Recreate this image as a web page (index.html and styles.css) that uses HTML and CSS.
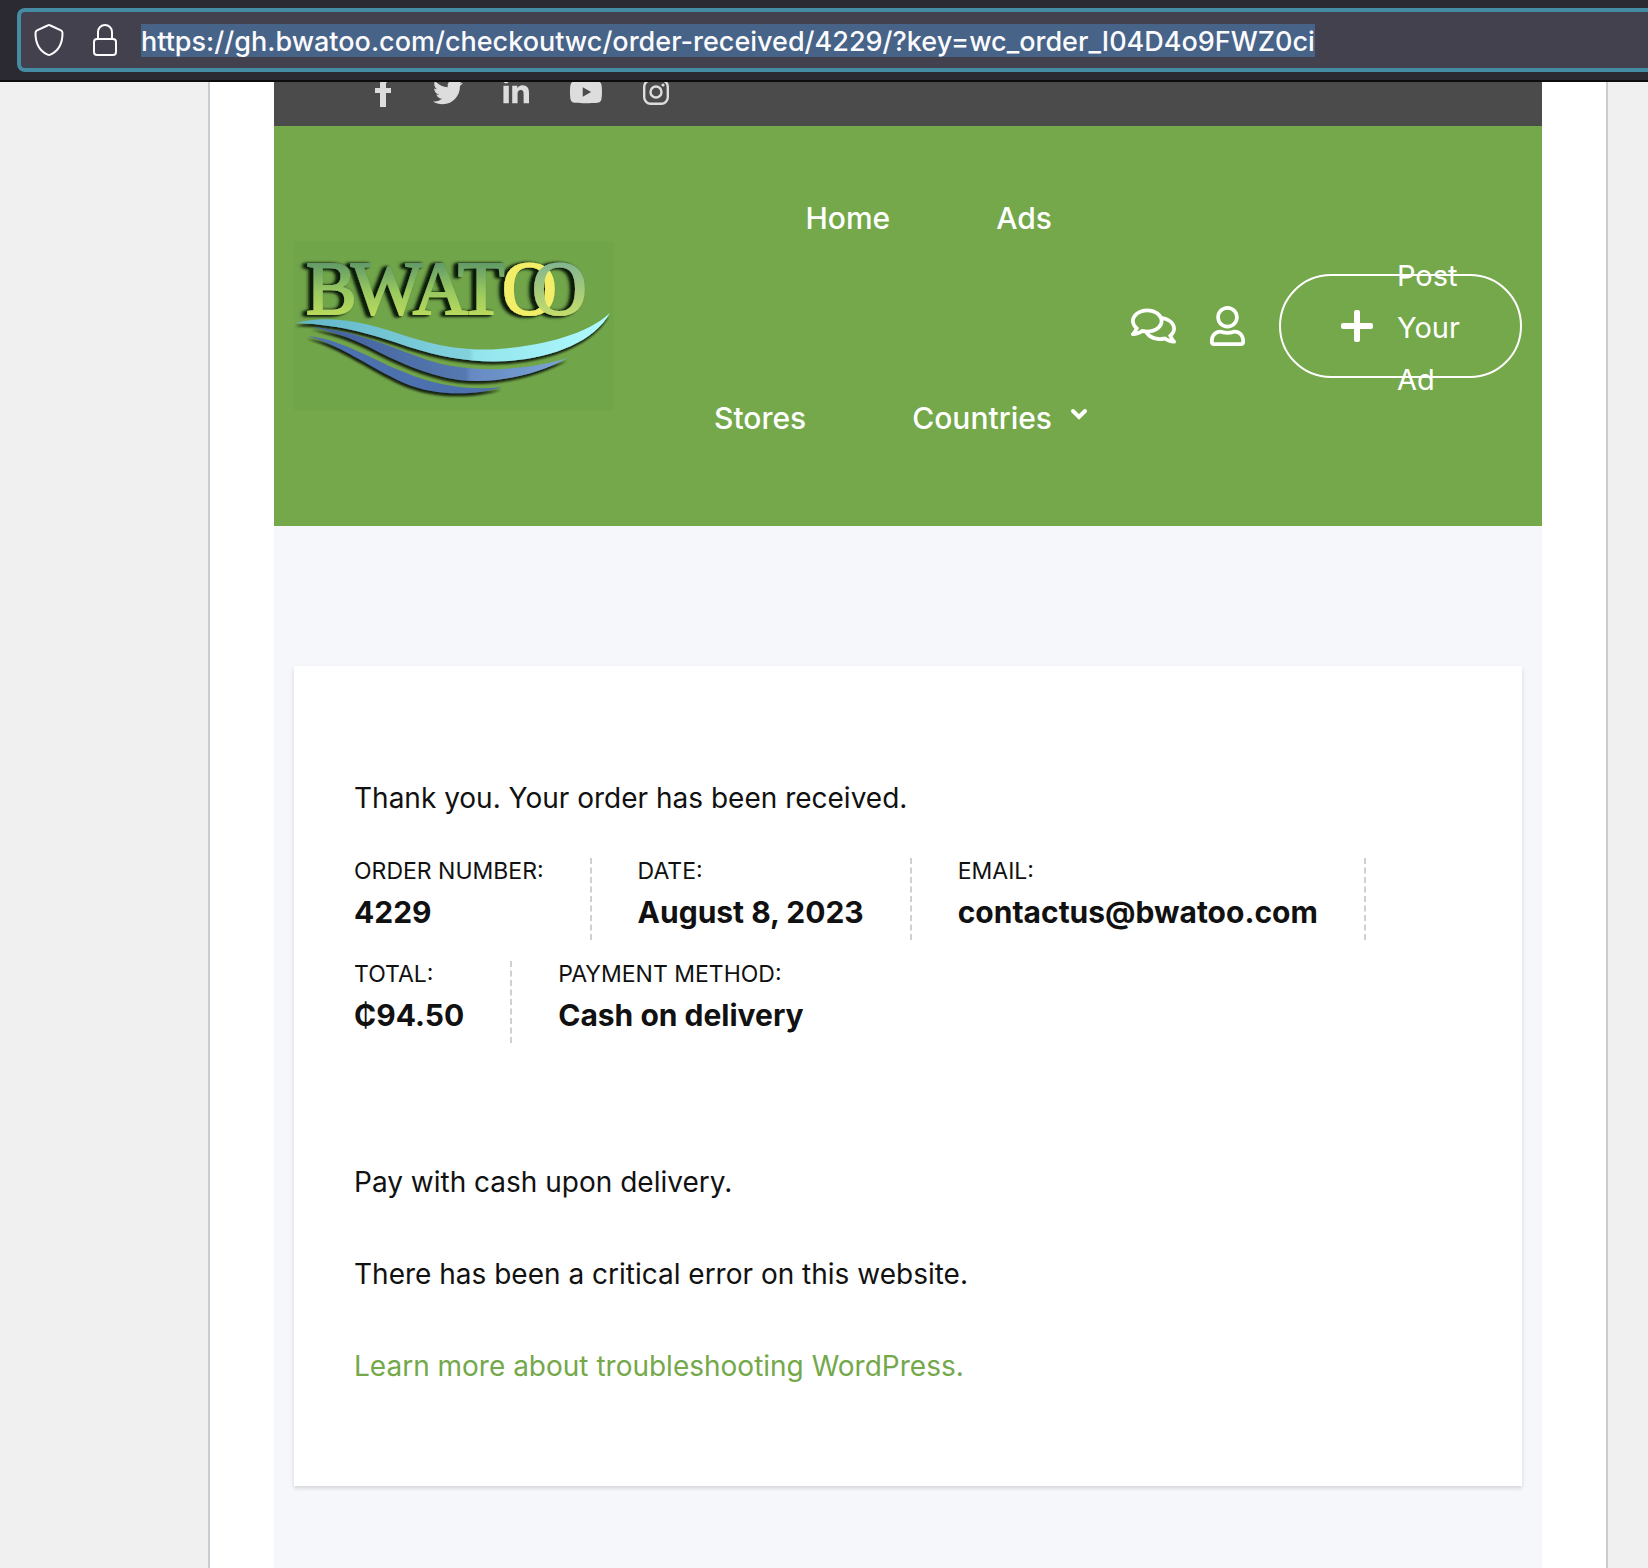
FILE: index.html
```html
<!DOCTYPE html>
<html lang="en">
<head>
    <meta charset="UTF-8">
    <meta name="viewport" content="width=device-width, initial-scale=1.0">
    <title>Order received - Bwatoo</title>
    <link rel="stylesheet" href="styles.css">
</head>
<body>
    <div class="browser-bar">
        <div class="url-box">
            <svg class="url-icon shield" viewBox="0 0 30 32" fill="none" stroke="#fbfbfe" stroke-width="2" stroke-linejoin="round">
                <path d="M13.600 1.500Q15 .7 16.400 1.500L27 6.400Q28.500 7.200 28.500 9C28.500 19 24.500 27 16.400 30.600Q15 31.300 13.600 30.600C5.500 27 1.500 19 1.500 9Q1.500 7.200 3 6.400Z"/>
            </svg>
            <svg class="url-icon lock" viewBox="0 0 24 32" fill="none" stroke="#fbfbfe" stroke-width="2">
                <path d="M5 15V8a7 7 0 0 1 14 0v7"/>
                <rect x="1" y="15" width="22" height="16" rx="3"/>
            </svg>
            <input class="url-input" type="text" aria-label="Address" value="https://gh.bwatoo.com/checkoutwc/order-received/4229/?key=wc_order_I04D4o9FWZ0ci">
        </div>
    </div>

    <div class="page">
        <div class="site">
            <div class="top-bar">
                <a href="#" aria-label="Facebook">
                    <svg width="18" height="30" viewBox="0 0 18 30"><path d="M5 30V16H0v-5h5V7c0-5 3-7 7-7h4v5h-3c-2 0-2 1-2 3v3h5v5h-5v14z"/></svg>
                </a>
                <a href="#" aria-label="Twitter">
                    <svg width="30" height="30" viewBox="0 0 512 512"><path d="M459.370 151.716c.325 4.548.325 9.097.325 13.645 0 138.720-105.583 298.558-298.558 298.558-59.452 0-114.680-17.219-161.137-47.106 8.447.974 16.568 1.299 25.340 1.299 49.055 0 94.213-16.568 130.274-44.832-46.132-.975-84.792-31.188-98.112-72.772 6.498.974 12.995 1.624 19.818 1.624 9.421 0 18.843-1.300 27.614-3.573-48.081-9.747-84.143-51.980-84.143-102.985v-1.299c13.969 7.797 30.214 12.670 47.431 13.319-28.264-18.843-46.781-51.005-46.781-87.391 0-19.492 5.197-37.360 14.294-52.954 51.655 63.675 129.300 105.258 216.365 109.807-1.624-7.797-2.599-15.918-2.599-24.040 0-57.828 46.782-104.934 104.934-104.934 30.213 0 57.502 12.670 76.670 33.137 23.715-4.548 46.456-13.320 66.599-25.340-7.798 24.366-24.366 44.833-46.132 57.827 21.117-2.273 41.584-8.122 60.426-16.243-14.292 20.791-32.161 39.308-52.628 54.253z"/></svg>
                </a>
                <a href="#" aria-label="LinkedIn">
                    <svg width="26" height="30" viewBox="0 0 448 512"><path d="M100.280 448H7.400V148.900h92.880zM53.790 108.100C24.090 108.100 0 83.500 0 53.800a53.790 53.790 0 0 1 107.580 0c0 29.700-24.100 54.300-53.790 54.300zM447.900 448h-92.680V302.400c0-34.700-.7-79.200-48.290-79.200-48.290 0-55.690 37.700-55.690 76.700V448h-92.780V148.900h89.080v40.800h1.300c12.400-23.500 42.690-48.300 87.880-48.300 94 0 111.280 61.900 111.280 142.300V448z"/></svg>
                </a>
                <a href="#" aria-label="YouTube">
                    <svg width="34" height="30" viewBox="0 0 576 512"><path d="M549.655 124.083c-6.281-23.650-24.787-42.276-48.284-48.597C458.781 64 288 64 288 64S117.220 64 74.629 75.486c-23.497 6.322-42.003 24.947-48.284 48.597-11.412 42.867-11.412 132.305-11.412 132.305s0 89.438 11.412 132.305c6.281 23.650 24.787 41.500 48.284 47.821C117.220 448 288 448 288 448s170.780 0 213.371-11.486c23.497-6.321 42.003-24.171 48.284-47.821 11.412-42.867 11.412-132.305 11.412-132.305s0-89.438-11.412-132.305zm-317.510 213.508V175.185l142.739 81.205-142.739 81.201z"/></svg>
                </a>
                <a href="#" aria-label="Instagram">
                    <svg width="26" height="30" viewBox="0 0 26 30"><rect x="1.200" y="3.200" width="23.600" height="23.600" rx="6.500" fill="none" stroke="#ddd" stroke-width="2.400"/><circle cx="13" cy="15" r="5.500" fill="none" stroke="#ddd" stroke-width="2.400"/><circle cx="20" cy="8" r="1.600"/></svg>
                </a>
            </div>

            <header class="header">
                <a class="logo" href="#" aria-label="Bwatoo">
                    <svg viewBox="0 0 320 170" width="320" height="170">
                        <defs>
                            <linearGradient id="letters" gradientUnits="userSpaceOnUse" x1="0" y1="22" x2="0" y2="74">
                                <stop offset="0" stop-color="#629a68"/>
                                <stop offset=".55" stop-color="#98c860"/>
                                <stop offset="1" stop-color="#b9da5c"/>
                            </linearGradient>
                            <linearGradient id="lastO" gradientUnits="userSpaceOnUse" x1="0" y1="22" x2="0" y2="74">
                                <stop offset="0" stop-color="#83b590"/>
                                <stop offset="1" stop-color="#c3dc6c"/>
                            </linearGradient>
                            <linearGradient id="wave1"><stop offset="0" stop-color="#62b6c8"/><stop offset=".55" stop-color="#82d2de"/><stop offset=".57" stop-color="#92e4ec"/><stop offset="1" stop-color="#b0fbff"/></linearGradient>
                            <linearGradient id="wave2"><stop offset="0" stop-color="#43609c"/><stop offset=".6" stop-color="#5579b0"/><stop offset=".62" stop-color="#6689c2"/><stop offset="1" stop-color="#7ba6d4"/></linearGradient>
                            <filter id="shade" x="-10%" y="-10%" width="120%" height="120%">
                                <feDropShadow dx="-3" dy="1" stdDeviation="1.200" flood-color="#0c1a08"/>
                                <feDropShadow dx="-2" dy="0" stdDeviation="1.500" flood-color="#0c1a08"/>
                            </filter>
                            <filter id="under" x="-10%" y="-20%" width="120%" height="140%">
                                <feDropShadow dx="-1" dy="3" stdDeviation="1.200" flood-color="#12240d"/>
                            </filter>
                        </defs>
                        <rect width="320" height="170" fill="#71a54a"/>
                        <g class="logo-text" filter="url(#shade)">
                            <text x="12 57 119 164 208 238" y="73" fill="url(#letters)" stroke="url(#letters)">BWAT<tspan fill="#f3ee68" stroke="#f3ee68">O</tspan><tspan fill="url(#lastO)" stroke="url(#lastO)">O</tspan></text>
                        </g>
                        <g filter="url(#under)">
                            <path fill="url(#wave1)" d="M2 82C40 72 80 84 115 96C150 107 180 110 205 108C250 104 292 94 316 72C300 100 262 116 215 120C180 122 150 117 115 106C80 94 50 84 2 82Z"/>
                            <path fill="url(#wave2)" d="M18 86C60 90 90 103 125 116C160 130 215 134 274 117C240 135 200 143 165 139C130 134 100 119 75 106C55 96 35 90 18 86Z"/>
                            <path fill="#4d6fae" d="M14 95C50 99 80 120 110 131C140 144 175 150 208 146C180 155 140 155 110 142C75 126 50 106 14 95Z"/>
                        </g>
                    </svg>
                </a>
                <nav class="nav">
                    <a href="#">Home</a>
                    <a href="#">Ads</a>
                    <a href="#">Stores</a>
                    <a class="has-menu" href="#">Countries<svg class="chevron" width="18" height="12" viewBox="0 0 18 12" fill="none" stroke="#fff" stroke-width="4" stroke-linecap="round"><path d="M3 3l6 6 6-6"/></svg></a>
                </nav>
                <div class="actions">
                    <a href="#" aria-label="Chat">
                        <svg width="45" height="40" viewBox="0 0 576 512"><path d="M532 386.200c27.500-27.100 44-61.100 44-98.200 0-80-76.500-146.100-176.200-157.900C368.300 72.500 294.300 32 208 32 93.100 32 0 103.600 0 192c0 37 16.500 71 44 98.200-15.300 30.700-37.300 54.500-37.700 54.900-6.300 6.700-8.100 16.500-4.400 25 3.600 8.500 12 14 21.200 14 53.500 0 96.700-20.200 125.200-38.800 9.200 2.100 18.700 3.700 28.400 4.900C208.100 407.600 281.800 448 368 448c20.800 0 40.800-2.400 59.800-6.800C456.300 459.700 499.400 480 553 480c9.200 0 17.500-5.500 21.200-14 3.600-8.500 1.900-18.300-4.400-25-.4-.3-22.500-24.100-37.800-54.800zm-392.800-92.300L122.100 305c-14.100 9.100-28.500 16.300-43.100 21.400 2.700-4.700 5.400-9.700 8-14.800l15.500-31.100L77.700 256C64.200 242.600 48 220.700 48 192c0-60.700 73.300-112 160-112s160 51.300 160 112-73.300 112-160 112c-16.500 0-33-1.900-49-5.600l-19.800-4.500zM498.300 352l-24.700 24.400 15.500 31.100c2.600 5.100 5.300 10.100 8 14.800-14.600-5.100-29-12.300-43.100-21.400l-17.100-11.100-19.900 4.600c-16 3.700-32.500 5.600-49 5.600-54 0-102.200-20.100-131.300-49.700C338 339.500 416 272.900 416 192c0-3.400-.4-6.700-.7-10C479.700 196.500 528 238.800 528 288c0 28.700-16.200 50.600-29.700 64z"/></svg>
                    </a>
                    <a href="#" aria-label="Account">
                        <svg width="35" height="40" viewBox="0 0 448 512"><path d="M313.600 304c-28.700 0-42.500 16-89.600 16-47.100 0-60.800-16-89.600-16C60.200 304 0 364.200 0 438.400V464c0 26.500 21.500 48 48 48h352c26.500 0 48-21.500 48-48v-25.600c0-74.200-60.200-134.400-134.400-134.400zM400 464H48v-25.600c0-47.600 38.800-86.400 86.400-86.400 14.600 0 38.300 16 89.600 16 51.700 0 74.900-16 89.600-16 47.600 0 86.400 38.800 86.400 86.400V464zM224 288c79.500 0 144-64.500 144-144S303.500 0 224 0 80 64.500 80 144s64.500 144 144 144zm0-240c52.900 0 96 43.100 96 96s-43.100 96-96 96-96-43.100-96-96 43.100-96 96-96z"/></svg>
                    </a>
                    <button class="post-ad" type="button">
                        <svg width="32" height="32" viewBox="0 0 32 32"><path d="M15 0h2q2 0 2 2v11h11q2 0 2 2v2q0 2-2 2H19v11q0 2-2 2h-2q-2 0-2-2V19H2q-2 0-2-2v-2q0-2 2-2h11V2q0-2 2-2z"/></svg>
                        <span>Post Your Ad</span>
                    </button>
                </div>
            </header>

            <main class="content">
                <div class="card">
                    <p>Thank you. Your order has been received.</p>
                    <ul class="order-details">
                        <li>Order number:<strong>4229</strong></li>
                        <li>Date:<strong>August 8, 2023</strong></li>
                        <li>Email:<strong>contactus@bwatoo.com</strong></li>
                        <li>Total:<strong>₵94.50</strong></li>
                        <li>Payment method:<strong>Cash on delivery</strong></li>
                    </ul>
                    <p>Pay with cash upon delivery.</p>
                    <p>There has been a critical error on this website.</p>
                    <p><a href="#">Learn more about troubleshooting WordPress.</a></p>
                </div>
            </main>
        </div>
    </div>
</body>
</html>
```
FILE: styles.css
```css
* {
    box-sizing: border-box;
}
body {
    margin: 0;
    min-height: 100vh;
    display: flex;
    flex-direction: column;
    background-color: #f0f0f0;
    color: #111;
    font-family: Inter, "Liberation Sans", sans-serif;
    font-size: 28px;
    line-height: 52px;
}
a {
    color: inherit;
    text-decoration: none;
}
svg {
    display: block;
}

/* Browser address bar */
.browser-bar {
    padding: 8px 0 8px 17px;
    background-color: #2b2a33;
    border-bottom: 2px solid #0c0c0d;
}
.url-box {
    display: flex;
    align-items: center;
    height: 64px;
    padding-left: 13px;
    background-color: #42414d;
    border: 4px solid #458ba3;
    border-right: none;
    border-radius: 8px 0 0 8px;
    overflow: hidden;
}
.url-icon {
    flex: none;
    height: 32px;
}
.shield {
    width: 30px;
    margin-right: 29px;
}
.lock {
    width: 24px;
    margin-right: 24px;
}
.url-input {
    field-sizing: content;
    height: 33px;
    padding: 2px 0 0;
    border: none;
    outline: none;
    background-color: #476387;
    color: #fbfbfe;
    font: 450 27px/31px Inter, "Liberation Sans", sans-serif;
}

/* Page frame */
.page {
    flex: 1;
    display: flex;
    margin: 0 40px 0 208px;
    padding: 0 64px;
    background-color: #fff;
    border: solid #c8cdd1;
    border-width: 0 2px;
}
.site {
    flex: 1;
    background-color: #f5f7fb;
}

.top-bar {
    display: flex;
    gap: 40px;
    height: 44px;
    padding-left: 101px;
    background-color: #4b4b4b;
    fill: #ddd;
    overflow: hidden;
}
.top-bar svg {
    margin-top: -5px;
}

.header {
    display: flex;
    align-items: center;
    padding: 0 20px;
    background-color: #74a84a;
    color: #fff;
    fill: #fff;
}
.nav {
    flex: 1;
    display: flex;
    flex-wrap: wrap;
    justify-content: flex-end;
    column-gap: 106px;
    padding: 0 79px 0 60px;
    font-size: 30px;
    font-weight: 450;
    line-height: 184px;
}
.nav a {
    height: 200px;
}
.has-menu {
    position: relative;
}
.chevron {
    position: absolute;
    left: calc(100% + 18px);
    top: 82px;
}
.actions {
    display: flex;
    align-items: center;
    gap: 34px;
}
.post-ad {
    display: flex;
    align-items: center;
    gap: 24px;
    width: 243px;
    height: 104px;
    padding: 0 58px 0 60px;
    border: 2px solid #fff;
    border-radius: 52px;
    background: none;
    color: #fff;
    fill: #fff;
    font: 29px/52px Inter, "Liberation Sans", sans-serif;
    text-align: left;
}
.post-ad svg {
    flex: none;
}
.post-ad span {
    padding-top: 4px;
}
.logo-text {
    font-family: "Liberation Serif", serif;
    font-size: 76px;
    stroke-width: 2px;
}

.content {
    padding: 140px 20px 80px;
}
.card {
    padding: 106px 60px 94px;
    background-color: #fff;
    box-shadow: 0 2px 4px rgba(0,0,0,0.15);
}
.card p {
    margin: 0 0 40px;
}
.card p:last-child {
    margin-bottom: 0;
}
.card a {
    color: #74a84a;
}
.order-details {
    display: flex;
    flex-wrap: wrap;
    row-gap: 21px;
    margin: -6px 0 113px;
    padding: 0;
    list-style: none;
}
.order-details li {
    margin-right: 46px;
    padding-right: 46px;
    border-right: 2px dashed #d3ced2;
    font-size: 23px;
    line-height: 26px;
    text-transform: uppercase;
}
.order-details li:last-child {
    margin-right: 0;
    border-right: none;
}
.order-details strong {
    display: block;
    font-size: 30px;
    line-height: 56px;
    text-transform: none;
}
```
